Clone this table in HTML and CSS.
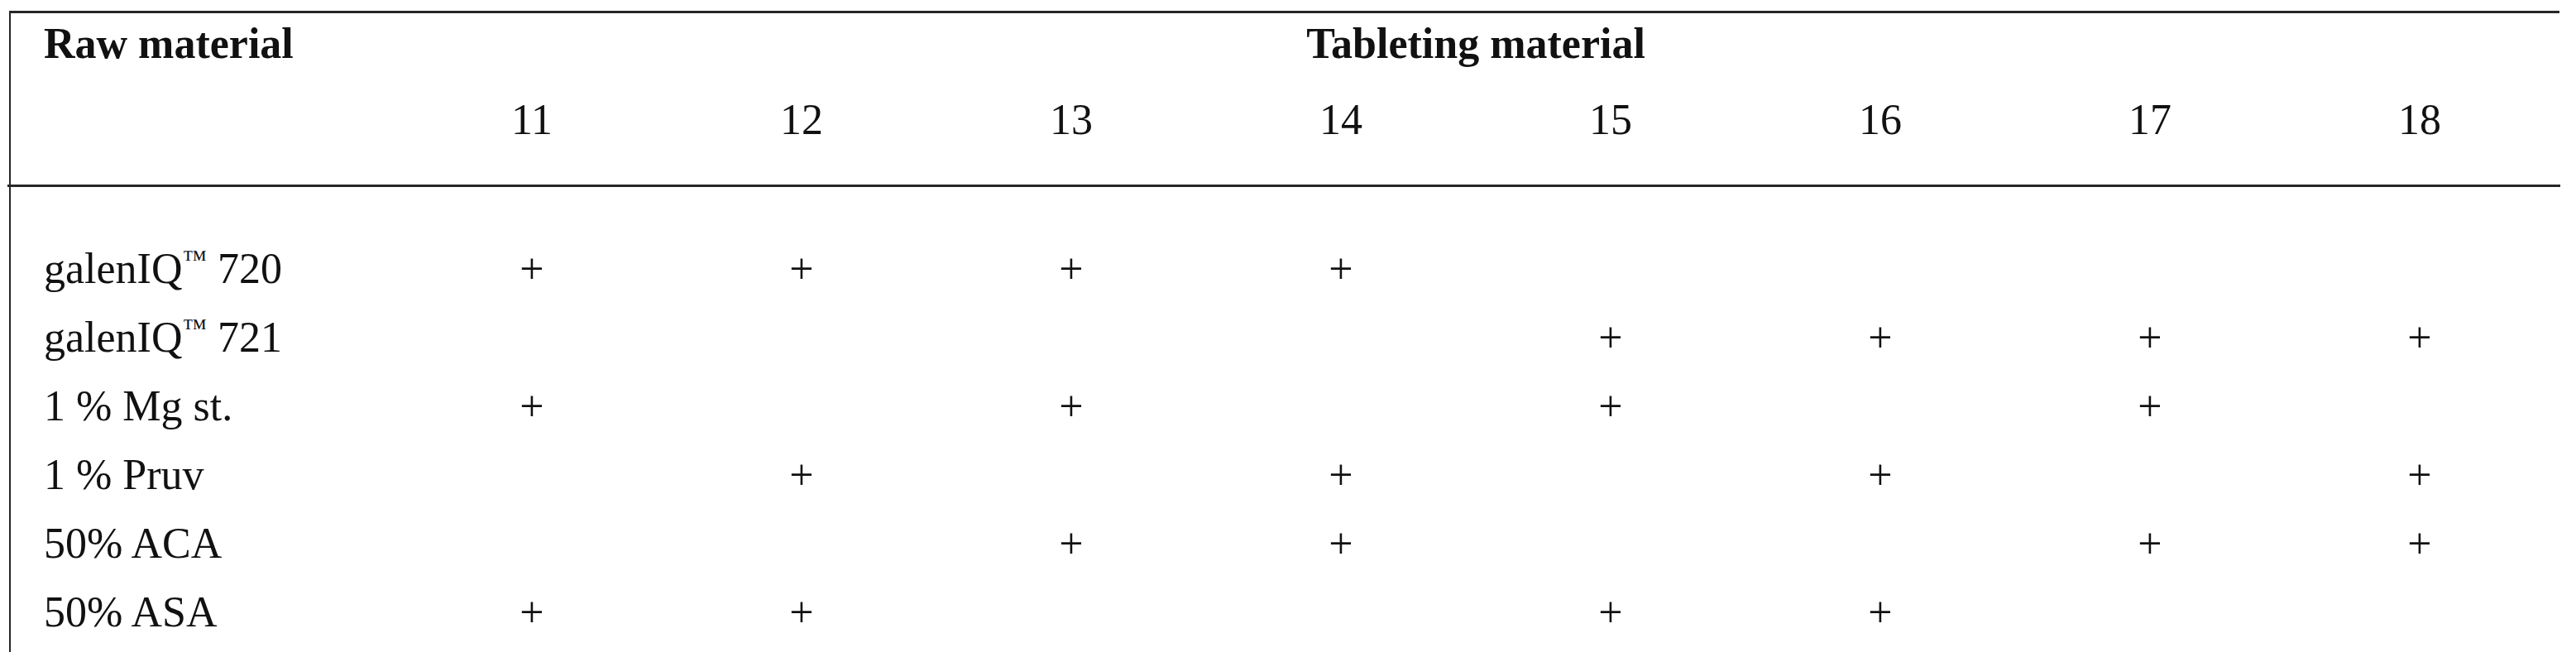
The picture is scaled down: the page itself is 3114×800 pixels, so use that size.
FILE: index.html
```html
<!DOCTYPE html>
<html lang="en">
<head>
<meta charset="utf-8">
<title>Raw material / Tableting material</title>
<link rel="stylesheet" href="styles.css">
</head>
<body>
<div class="table">
  <div class="row head-top">
    <div class="label">Raw material</div>
    <div class="span-all">Tableting material</div>
  </div>
  <div class="row head-nums">
    <div class="label"></div>
    <div class="cell">11</div>
    <div class="cell">12</div>
    <div class="cell">13</div>
    <div class="cell">14</div>
    <div class="cell">15</div>
    <div class="cell">16</div>
    <div class="cell">17</div>
    <div class="cell">18</div>
  </div>
  <div class="rule"></div>
  <div class="body">
    <div class="row">
      <div class="label">galenIQ<span class="tm">™</span> 720</div>
      <div class="cell">+</div><div class="cell">+</div><div class="cell">+</div><div class="cell">+</div>
      <div class="cell"></div><div class="cell"></div><div class="cell"></div><div class="cell"></div>
    </div>
    <div class="row">
      <div class="label">galenIQ<span class="tm">™</span> 721</div>
      <div class="cell"></div><div class="cell"></div><div class="cell"></div><div class="cell"></div>
      <div class="cell">+</div><div class="cell">+</div><div class="cell">+</div><div class="cell">+</div>
    </div>
    <div class="row">
      <div class="label">1 % Mg st.</div>
      <div class="cell">+</div><div class="cell"></div><div class="cell">+</div><div class="cell"></div>
      <div class="cell">+</div><div class="cell"></div><div class="cell">+</div><div class="cell"></div>
    </div>
    <div class="row">
      <div class="label">1 % Pruv</div>
      <div class="cell"></div><div class="cell">+</div><div class="cell"></div><div class="cell">+</div>
      <div class="cell"></div><div class="cell">+</div><div class="cell"></div><div class="cell">+</div>
    </div>
    <div class="row">
      <div class="label">50% ACA</div>
      <div class="cell"></div><div class="cell"></div><div class="cell">+</div><div class="cell">+</div>
      <div class="cell"></div><div class="cell"></div><div class="cell">+</div><div class="cell">+</div>
    </div>
    <div class="row">
      <div class="label">50% ASA</div>
      <div class="cell">+</div><div class="cell">+</div><div class="cell"></div><div class="cell"></div>
      <div class="cell">+</div><div class="cell">+</div><div class="cell"></div><div class="cell"></div>
    </div>
  </div>
</div>
</body>
</html>
```
FILE: styles.css
```css
html, body {
  margin: 0;
  padding: 0;
  background: #ffffff;
}

body {
  font-family: "Liberation Serif", "Times New Roman", serif;
  font-size: 52px;
  color: #111111;
}

.table {
  margin: 13px 0 0 11px;
  width: 3081px;
  border-top: 3px solid #262626;
  border-left: 2px solid #262626;
  padding-bottom: 7px;
}

.row {
  display: grid;
  grid-template-columns: 467px repeat(8, 326px);
  white-space: nowrap;
}

.label {
  padding-left: 40px;
}

.cell {
  text-align: center;
}

.span-all {
  grid-column: 2 / span 8;
  text-align: center;
}

.head-top {
  height: 73px;
  line-height: 73px;
  font-weight: bold;
}

.head-nums {
  height: 111px;
  line-height: 111px;
  padding-bottom: 23px;
}

.rule {
  height: 3px;
  background: #262626;
  margin-left: -4px;
  margin-right: -1px;
}

.body {
  padding-top: 57px;
}

.body .row {
  height: 83px;
  line-height: 83px;
}

.tm {
  font-size: 30px;
  line-height: 0;
  vertical-align: 19px;
}
```
